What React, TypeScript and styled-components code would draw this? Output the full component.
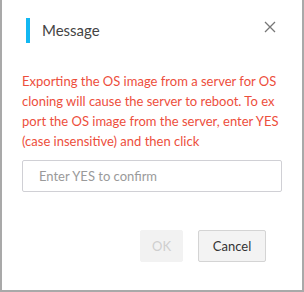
import React from "react";
import styled, { createGlobalStyle } from "styled-components";

const Global = createGlobalStyle`
  html, body { margin: 0; padding: 0; background: #a9a9a9; }
  body { font-family: "Lato", "Liberation Sans", sans-serif; }
`;

const Dialog = styled.div`
  margin: 0 2px;
  width: 300px;
  height: 290px;
  background: #fff;
  display: flex;
  flex-direction: column;
`;

const Header = styled.div`
  display: flex;
  align-items: flex-start;
  justify-content: space-between;
  padding: 18px 24px 0 24px;
  height: 71px;
  box-sizing: border-box;
`;

const Title = styled.div`
  border-left: 4px solid #12b8f2;
  padding-left: 12px;
  height: 25px;
  line-height: 25px;
  font-size: 15px;
  color: #444;
`;

const Close = styled.button`
  border: none;
  background: none;
  padding: 0;
  margin: 3px 2px 0 0;
  width: 12px;
  height: 12px;
  display: flex;
  cursor: pointer;
`;

const Body = styled.div`
  padding: 0 20px;
`;

const Warning = styled.p`
  margin: 0;
  max-width: 258px;
  color: #ed4e3c;
  font-size: 13px;
  line-height: 20px;
  word-break: break-all;
`;

const Input = styled.input`
  display: block;
  box-sizing: border-box;
  width: 260px;
  height: 32px;
  margin-top: 9px;
  border: 1px solid #d0d0d5;
  border-radius: 2px;
  padding: 0 16px;
  font-family: inherit;
  font-size: 13px;
  color: #333;
  &::placeholder { color: #9a9a9a; }
`;

const Footer = styled.div`
  display: flex;
  justify-content: flex-end;
  gap: 15px;
  padding: 38px 36px 0 0;
`;

const Button = styled.button<{ $disabled?: boolean; $w: number }>`
  height: 32px;
  width: ${(p) => p.$w}px;
  box-sizing: border-box;
  padding: 0;
  border-radius: 2px;
  font-family: inherit;
  font-size: 13px;
  border: 1px solid ${(p) => (p.$disabled ? "#f2f2f2" : "#d4d4d4")};
  background: ${(p) => (p.$disabled ? "#f2f2f2" : "#f3f3f3")};
  color: ${(p) => (p.$disabled ? "#cfcfcf" : "#333")};
`;

export default function App() {
  return (
    <>
      <Global />
      <Dialog>
        <Header>
          <Title>Message</Title>
          <Close aria-label="close">
            <svg width="12" height="12" viewBox="0 0 12 12">
              <path d="M1 1L11 11M11 1L1 11" stroke="#777" strokeWidth="1.3" />
            </svg>
          </Close>
        </Header>
        <Body>
          <Warning>
            Exporting the OS image from a server for OS cloning will cause the server to reboot. To export the OS image from the server, enter YES (case insensitive) and then click
          </Warning>
          <Input placeholder="Enter YES to confirm" />
        </Body>
        <Footer>
          <Button $disabled disabled $w={43}>OK</Button>
          <Button $w={68}>Cancel</Button>
        </Footer>
      </Dialog>
    </>
  );
}
